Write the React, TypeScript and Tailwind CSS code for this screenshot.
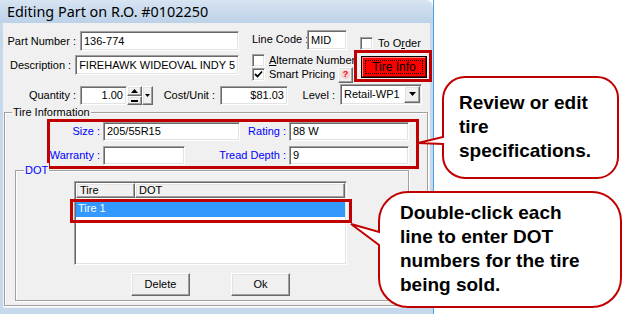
import type { ReactNode } from "react";

const sunken =
  "bg-white border border-t-[#a0a0a0] border-l-[#a0a0a0] border-b-white border-r-white shadow-[inset_1px_1px_0_#696969,inset_-1px_-1px_0_#e3e3e3]";
const raised =
  "bg-[#f0f0f0] border border-t-white border-l-white border-b-[#696969] border-r-[#696969] shadow-[inset_-1px_-1px_0_#a0a0a0,inset_1px_1px_0_#e3e3e3]";

function Field({ w, h = "h-[19px]", value = "", right = false }: { w: string; h?: string; value?: string; right?: boolean }) {
  return (
    <div className={`${sunken} ${w} ${h} flex items-center px-[3px] overflow-hidden whitespace-nowrap ${right ? "justify-end" : ""}`}>
      {value}
    </div>
  );
}

function Label({ w, children, blue = false, left = false }: { w: string; children: ReactNode; blue?: boolean; left?: boolean }) {
  return (
    <div className={`${w} h-[19px] flex items-center whitespace-nowrap ${left ? "justify-start" : "justify-end"} ${blue ? "text-[#0000ff]" : ""}`}>
      {children}
    </div>
  );
}

function Check({ checked = false }: { checked?: boolean }) {
  return (
    <div className={`${sunken} w-[13px] h-[13px] shrink-0 flex items-center justify-center`}>
      {checked && (
        <svg width="9" height="9" viewBox="0 0 9 9">
          <path d="M1 4 L3.5 6.5 L8 1.5" fill="none" stroke="#000" strokeWidth="1.8" />
        </svg>
      )}
    </div>
  );
}

function DownArrow({ size = 7 }: { size?: number }) {
  return (
    <svg width={size} height={Math.ceil(size / 2) + 1} viewBox={`0 0 ${size} ${Math.ceil(size / 2) + 1}`}>
      <path d={`M0 0 H${size} L${size / 2} ${Math.ceil(size / 2)} Z`} fill="#000" />
    </svg>
  );
}

function Callout({
  className,
  w,
  h,
  path,
  textPos,
  lines,
}: {
  className: string;
  w: number;
  h: number;
  path: string;
  textPos: string;
  lines: string[];
}) {
  return (
    <div className={`absolute ${className}`}>
      <svg width={w} height={h} viewBox={`0 0 ${w} ${h}`}>
        <path d={path} fill="#fff" stroke="#c00000" strokeWidth="2" />
      </svg>
      <div className={`absolute ${textPos} font-['Liberation_Sans',Arial,sans-serif] font-bold text-[19px] leading-[24px] text-black`}>
        {lines.map((l) => (
          <div key={l} className="whitespace-nowrap">{l}</div>
        ))}
      </div>
    </div>
  );
}

export default function App() {
  return (
    <div className="relative w-[627px] h-[314px] overflow-hidden bg-white font-['Liberation_Sans',Arial,sans-serif] text-[11px] text-black">
      <div className="w-[434px] flex flex-col border-r border-[#4aa3e6]">
        {/* title bar */}
        <div className="h-[23px] flex items-center pl-[7px] bg-gradient-to-b from-[#d7e4f2] to-[#bcd1e8] rounded-tr-[7px] font-['Noto_Sans',sans-serif] text-[14.4px]">
          Editing Part on R.O. #0102250
        </div>

        {/* body */}
        <div className="bg-[#f0f0f0] border-l-[3px] border-r-[3px] border-b-[8px] border-[#c6d8ec] pb-[2px]">
          {/* top section */}
          <div className="flex mt-[7px]">
            <div className="w-[236px] flex flex-col gap-[4px] pt-[1px]">
              <div className="flex items-center">
                <Label w="w-[73px]">Part Number :</Label>
                <div className="ml-[4px] flex-1">
                  <Field w="w-full" h="h-[20px]" value="136-774" />
                </div>
              </div>
              <div className="flex items-center">
                <Label w="w-[73px]">Description :</Label>
                <div className="ml-[4px] flex-1">
                  <Field w="w-full" h="h-[20px]" value="FIREHAWK WIDEOVAL INDY 5" />
                </div>
              </div>
            </div>

            <div className="ml-[13px] w-[180px] flex flex-col">
              <div className="flex h-[20px]">
                <Label w="w-[55px]" left>
                  Line Code :
                </Label>
                <Field w="w-[40px]" h="h-[20px]" value="MID" />
                <div className="ml-[13px] mt-[7px] flex items-center h-[13px]">
                  <Check />
                  <span className="ml-[5px] whitespace-nowrap">
                    To O<span className="underline">r</span>der
                  </span>
                </div>
              </div>

              <div className="flex">
                <div className="w-[102px] flex flex-col">
                  <div className="mt-[4px] flex items-center h-[13px]">
                    <Check />
                    <span className="ml-[4px] whitespace-nowrap">
                      <span className="underline">A</span>lternate Number
                    </span>
                  </div>
                  <div className="mt-[1px] flex items-center h-[13px]">
                    <Check checked />
                    <span className="ml-[4px] whitespace-nowrap">Smart Pricing</span>
                    <div className={`${raised} ml-[3px] w-[15px] h-[16px] shrink-0 flex items-center justify-center`}>
                      <span className="w-[9px] h-[9px] rounded-full bg-[#f7d0d0] flex items-center justify-center text-[9px] font-bold text-[#e01010] leading-none">
                        ?
                      </span>
                    </div>
                  </div>
                </div>

                <div className="w-[78px] h-[32px] border-[3px] border-[#c00000] pl-[4px] pt-[3px] pr-[2px] pb-[1px]">
                  <div className="w-full h-full border border-black">
                    <div className="w-full h-full bg-[#ff0000] border border-t-[#ff8080] border-l-[#ff8080] border-b-[#800000] border-r-[#800000] p-[2px]">
                      <div className="w-full h-full border border-dotted border-black flex items-center justify-center text-black text-[12px]">
                        Tire Info
                      </div>
                    </div>
                  </div>
                </div>
              </div>
            </div>
          </div>

          {/* quantity row */}
          <div className="flex items-end h-[21px] mt-[2px]">
            <Label w="w-[73px]">Quantity :</Label>
            <div className="ml-[4px]">
              <Field w="w-[47px]" value="1.00" right />
            </div>
            <div className="w-[15px] h-[19px] flex flex-col">
              <div className={`${raised} h-[10px] flex items-center justify-center`}>
                <svg width="7" height="4" viewBox="0 0 7 4">
                  <path d="M0 4 H7 L3.5 0 Z" fill="#000" />
                </svg>
              </div>
              <div className={`${raised} h-[9px] flex items-center justify-center`}>
                <div className="w-[7px] h-[2px] bg-black" />
              </div>
            </div>
            <div className={`${raised} w-[11px] h-[19px] flex items-center justify-center`}>
              <DownArrow size={5} />
            </div>
            <Label w="w-[50px] ml-[12px]">Cost/Unit :</Label>
            <div className="ml-[5px]">
              <Field w="w-[68px]" value="$81.03" right />
            </div>
            <Label w="w-[31px] ml-[16px]">Level :</Label>
            <div className={`${sunken} ml-[5px] w-[82px] h-[21px] flex items-center justify-between pl-[3px] pr-[1px]`}>
              <span>Retail-WP1</span>
              <div className={`${raised} w-[16px] h-[17px] flex items-center justify-center`}>
                <DownArrow size={7} />
              </div>
            </div>
          </div>

          {/* Tire Information group */}
          <div className="relative mt-[7px] ml-[1px] w-[424px] h-[194px] border border-[#a0a0a0] shadow-[1px_1px_0_#fff,inset_1px_1px_0_#fff]">
            <span className="absolute -top-[8px] left-[7px] px-[1px] bg-[#f0f0f0] leading-[14px]">Tire Information</span>

            <div className="ml-[42px] mt-[6px] w-[372px] h-[50px] border-[3px] border-[#c00000]">
              <div className="flex">
                <Label w="w-[50px]" blue>Size :</Label>
                <div className="ml-[3px]">
                  <Field w="w-[137px]" value="205/55R15" />
                </div>
                <Label w="w-[46px]" blue>Rating :</Label>
                <div className="ml-[3px]">
                  <Field w="w-[120px]" value="88 W" />
                </div>
              </div>
              <div className="flex mt-[5px]">
                <Label w="w-[50px]" blue>Warranty :</Label>
                <div className="ml-[3px]">
                  <Field w="w-[82px]" />
                </div>
                <Label w="w-[101px]" blue>Tread Depth :</Label>
                <div className="ml-[3px]">
                  <Field w="w-[120px]" value="9" />
                </div>
              </div>
            </div>

            {/* DOT group */}
            <div className="relative mt-[1px] ml-[10px] w-[394px] h-[131px] border border-[#a0a0a0] shadow-[1px_1px_0_#fff,inset_1px_1px_0_#fff]">
              <span className="absolute -top-[8px] left-[8px] px-[1px] bg-[#f0f0f0] leading-[14px] text-[#0000ff]">DOT</span>

              <div className={`${sunken} ml-[58px] mt-[10px] w-[273px] h-[84px] p-[1px]`}>
                <div className="flex h-[15px]">
                  <div className={`${raised} w-[59px] flex items-center pl-[3px]`}>Tire</div>
                  <div className={`${raised} flex-1 flex items-center pl-[3px]`}>DOT</div>
                </div>
                <div className="mt-[2px] h-[17px] bg-[#3399ff] text-white flex items-center pl-[2px]">Tire 1</div>
              </div>

              <div className="flex mt-[8px]">
                <div className={`${raised} ml-[115px] w-[59px] h-[23px] flex items-center justify-center`}>Delete</div>
                <div className={`${raised} ml-[41px] w-[59px] h-[23px] flex items-center justify-center`}>Ok</div>
              </div>
            </div>
          </div>
        </div>
      </div>

      {/* highlight around list row */}
      <div className="absolute left-[70px] top-[199px] w-[282px] h-[24px] border-[3px] border-[#c00000]" />

      <Callout
        className="left-[417px] top-[76px]"
        w={204}
        h={104}
        path="M48 1 H180 A21 21 0 0 1 201 22 V81 A21 21 0 0 1 180 102 H48 A22 22 0 0 1 26 80 V68 L1 67 L26 61 V23 A22 22 0 0 1 48 1 Z"
        textPos="left-[42px] top-[15px]"
        lines={["Review or edit", "tire", "specifications."]}
      />

      <Callout
        className="left-[350px] top-[191px]"
        w={274}
        h={120}
        path="M58 1 H242 A29 29 0 0 1 271 30 V87 A29 29 0 0 1 242 116 H58 A29 29 0 0 1 29 87 V54 L1 33 L29 41 V30 A29 29 0 0 1 58 1 Z"
        textPos="left-[50px] top-[10px]"
        lines={["Double-click each", "line to enter DOT", "numbers for the tire", "being sold."]}
      />
    </div>
  );
}
